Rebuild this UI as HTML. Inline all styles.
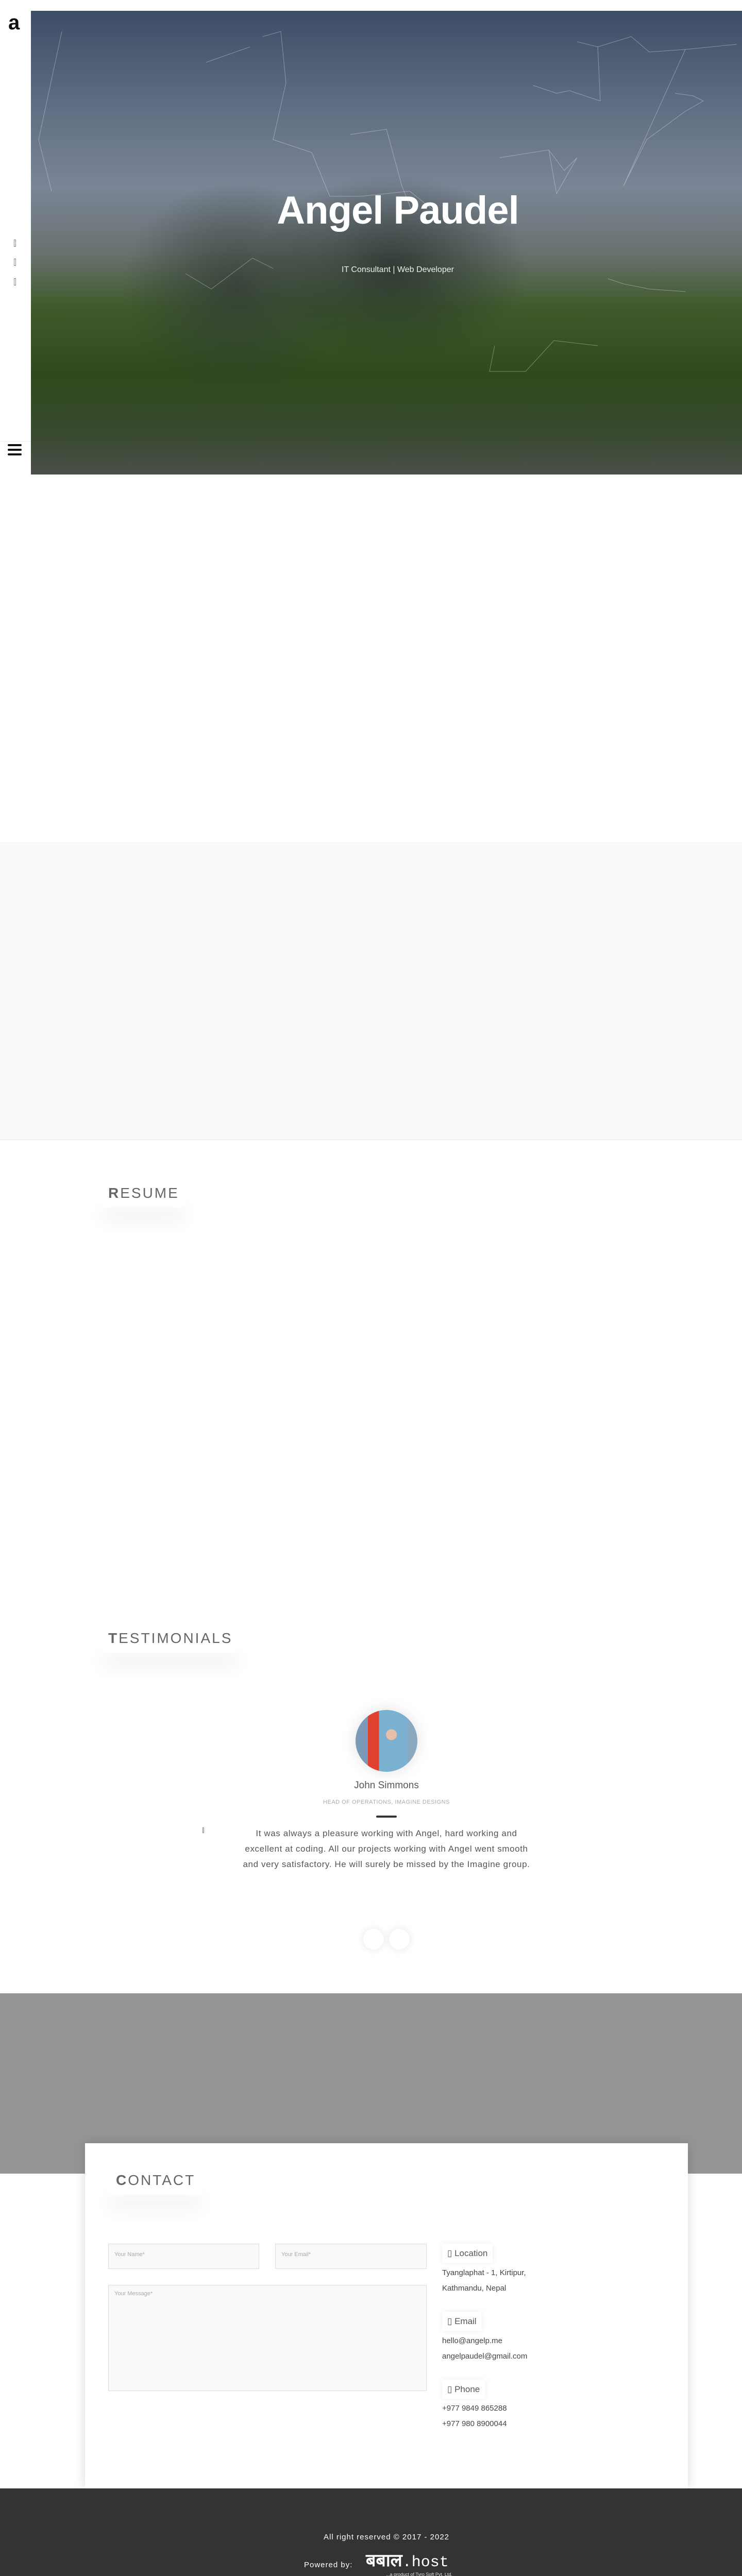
<!DOCTYPE html>
<html><head><meta charset="utf-8">
<style>
*{margin:0;padding:0;box-sizing:border-box}
html{width:1440px;height:5087px;overflow:hidden}
body{width:1440px;height:5087px;position:relative;background:#fff;font-family:"Liberation Sans",sans-serif;color:#555;overflow:hidden}
.abs{position:absolute}
#side{left:0;top:0;width:60px;height:920px;background:#fff}
#hero{left:60px;top:21px;width:1380px;height:900px;overflow:hidden;
background:
radial-gradient(ellipse 380px 260px at 700px 500px,rgba(40,50,45,.85),transparent 70%),
radial-gradient(ellipse 320px 300px at 400px 540px,rgba(50,60,55,.8),transparent 70%),
linear-gradient(180deg,#3d4d66 0%,#5f6d82 20%,#7a8596 38%,#6a7270 52%,#3f5a2a 64%,#2f4a1c 78%,#3a4a30 92%,#4a4f4a 100%)}
.h1{left:104px;width:1336px;top:365px;text-align:center;color:#fff;font-weight:bold;font-size:76px;letter-spacing:-1px}
.sub{left:104px;width:1336px;top:515px;text-align:center;color:#eee;font-size:16px;font-weight:300}
.sect-title{font-size:28px;letter-spacing:3px;color:#666;font-weight:300}
.sect-title b{font-weight:bold}
.shadowblob{border-radius:20px;box-shadow:0 25px 35px rgba(0,0,0,.07)}
.inp{background:#f9f9f9;border:1px solid #ddd;color:#aaa;font-size:11px;padding:14px 11px}
.lab{background:#fff;box-shadow:0 0 10px rgba(0,0,0,.07);font-size:17px;color:#555;padding:9px 10px}
.info{font-size:15px;color:#444;line-height:30px}
.ctr{left:60px;width:1380px;text-align:center}
</style></head><body>
<div class="abs" id="side"></div>
<div class="abs" style="left:16px;top:24px;font-size:40px;font-weight:bold;color:#111;line-height:40px">a</div>
<div class="abs" style="left:27px;top:465px;width:4px;height:14px;border:1px solid #888"></div>
<div class="abs" style="left:27px;top:502px;width:4px;height:14px;border:1px solid #888"></div>
<div class="abs" style="left:27px;top:540px;width:4px;height:14px;border:1px solid #888"></div>
<div class="abs" style="left:0;top:856px;width:60px;height:1px;background:#eee"></div>
<div class="abs" style="left:15px;top:862px;width:27px;height:4px;background:#111;border-radius:2px"></div>
<div class="abs" style="left:15px;top:871px;width:27px;height:4px;background:#111;border-radius:2px"></div>
<div class="abs" style="left:15px;top:880px;width:27px;height:4px;background:#111;border-radius:2px"></div>
<div class="abs" id="hero">
<svg width="1380" height="900" style="position:absolute;left:0;top:0" stroke="rgba(255,255,255,.35)" stroke-width="1" fill="none">
<polyline points="450,50 485,40 495,140 470,250 545,275 580,360 640,360 735,350 785,390"/>
<polyline points="1060,60 1100,70 1165,50 1200,80 1270,75 1370,65"/>
<polyline points="975,145 1020,160 1045,155 1105,175 1100,70"/>
<polyline points="1250,160 1285,165 1305,175 1270,195 1195,250 1150,340 1270,75"/>
<polyline points="910,285 1005,270 1035,310 1060,285 1020,355 1005,270"/>
<polyline points="60,40 15,250 40,350"/>
<polyline points="340,100 425,70"/>
<polyline points="620,240 690,230 720,340 740,390"/>
<polyline points="1120,520 1150,530 1200,540 1270,545"/>
<polyline points="300,510 350,540 430,480 470,500"/>
<polyline points="900,650 890,700 960,700 1015,640 1100,650"/>
</svg>
</div>
<div class="abs h1">Angel Paudel</div>
<div class="abs sub">IT Consultant | Web Developer</div>

<div class="abs" style="left:0;top:1635px;width:1440px;height:578px;background:#fafafa;border-top:1px solid #f3f3f3;border-bottom:2px solid #f3f3f3"></div>

<div class="abs shadowblob" style="left:196px;top:2323px;width:165px;height:20px"></div>
<div class="abs sect-title" style="left:210px;top:2300px"><b>R</b>ESUME</div>

<div class="abs shadowblob" style="left:196px;top:3188px;width:268px;height:20px"></div>
<div class="abs sect-title" style="left:210px;top:3164px"><b>T</b>ESTIMONIALS</div>

<div class="abs" style="left:690px;top:3319px;width:120px;height:120px;border-radius:50%;box-shadow:0 0 30px rgba(0,0,0,.12);background:radial-gradient(circle at 58% 40%,#e8c0a8 0 10%,transparent 11%),linear-gradient(90deg,#7a9ab8 0 20%,#e04030 20% 38%,#7ab0d0 38% 85%,#8aa8c0 85%);overflow:hidden"></div>
<div class="abs ctr" style="top:3455px;font-size:19px;color:#555">John Simmons</div>
<div class="abs ctr" style="top:3492px;font-size:11px;color:#aaa;letter-spacing:.5px">HEAD OF OPERATIONS, IMAGINE DESIGNS</div>
<div class="abs" style="left:730px;top:3524px;width:40px;height:4px;background:#333;border-radius:2px"></div>
<div class="abs" style="left:393px;top:3547px;width:3px;height:11px;border:1px solid #888"></div>
<div class="abs" style="left:400px;width:700px;top:3544px;text-align:center;font-size:17px;line-height:30px;color:#555;letter-spacing:.6px;white-space:nowrap">It was always a pleasure working with Angel, hard working and<br>excellent at coding. All our projects working with Angel went smooth<br>and very satisfactory. He will surely be missed by the Imagine group.</div>
<div class="abs" style="left:705px;top:3744px;width:40px;height:40px;border-radius:50%;background:#fff;box-shadow:0 0 15px rgba(0,0,0,.1)"></div>
<div class="abs" style="left:755px;top:3744px;width:40px;height:40px;border-radius:50%;background:#fff;box-shadow:0 0 15px rgba(0,0,0,.1)"></div>

<div class="abs" style="left:0;top:3869px;width:1440px;height:350px;background:#959595"></div>
<div class="abs" style="left:165px;top:4160px;width:1170px;height:670px;background:#fff;box-shadow:0 0 20px rgba(0,0,0,.15)"></div>
<div class="abs shadowblob" style="left:210px;top:4240px;width:183px;height:20px"></div>
<div class="abs sect-title" style="left:225px;top:4216px"><b>C</b>ONTACT</div>
<div class="abs inp" style="left:210px;top:4355px;width:293px;height:49px">Your Name*</div>
<div class="abs inp" style="left:534px;top:4355px;width:294px;height:49px">Your Email*</div>
<div class="abs inp" style="left:210px;top:4435px;width:618px;height:206px;padding-top:10px">Your Message*</div>
<div class="abs lab" style="left:858px;top:4355px;height:37px">▯ Location</div>
<div class="abs info" style="left:858px;top:4397px">Tyanglaphat - 1, Kirtipur,<br>Kathmandu, Nepal</div>
<div class="abs lab" style="left:858px;top:4487px;height:37px">▯ Email</div>
<div class="abs info" style="left:858px;top:4529px">hello@angelp.me<br>angelpaudel@gmail.com</div>
<div class="abs lab" style="left:858px;top:4619px;height:37px">▯ Phone</div>
<div class="abs info" style="left:858px;top:4660px">+977 9849 865288<br>+977 980 8900044</div>

<div class="abs" style="left:0;top:4830px;width:1440px;height:257px;background:#333"></div>
<div class="abs ctr" style="top:4916px;color:#fff;font-size:15px;letter-spacing:1px">All right reserved © 2017 - 2022</div>
<div class="abs" style="left:590px;top:4970px;color:#fff;font-size:15px;letter-spacing:1px">Powered by:</div>
<div class="abs" style="left:710px;top:4950px;color:#fff;font-size:34px;font-weight:bold;line-height:40px;font-family:'Liberation Sans','Noto Sans CJK SC',sans-serif;white-space:nowrap">बबाल<span style="font-family:'Liberation Mono',monospace;font-weight:normal;font-size:30px">.host</span></div>
<div class="abs" style="left:749px;top:4992px;color:#ddd;font-size:9px;white-space:nowrap">...a product of Tyro Soft Pvt. Ltd.</div>
</body></html>
